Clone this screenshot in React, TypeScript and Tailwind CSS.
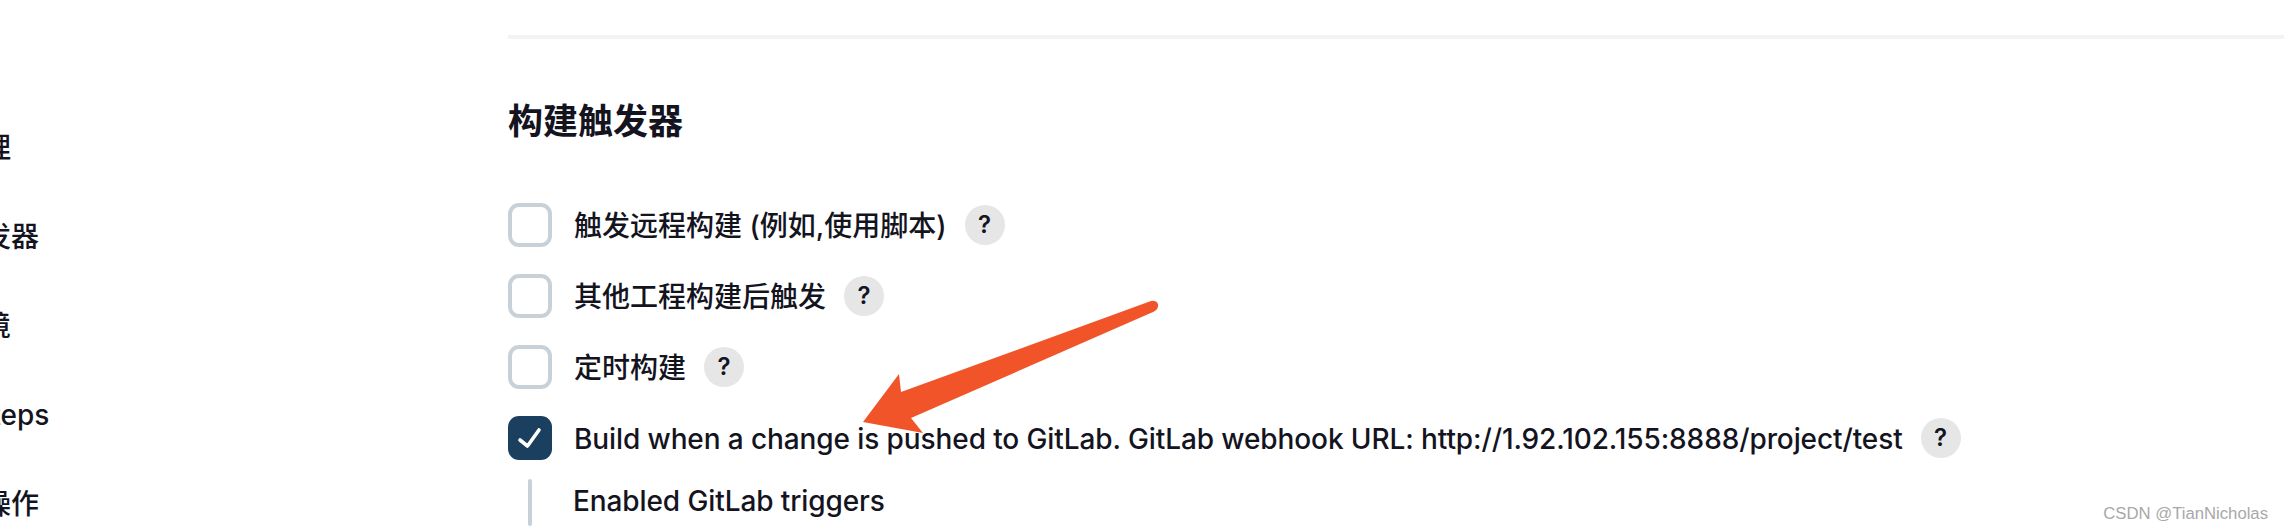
// sidebar nav, clipped on the left in the picture
const navItems = ['源码管理', '构建触发器', '构建环境', 'Build Steps', '构建后操作']

function HelpButton() {
  return (
    <span className="ml-[18px] flex h-10 w-10 shrink-0 items-center justify-center rounded-full bg-[#e6e6e7] text-[24px] font-semibold text-[#14141f]">
      ?
    </span>
  )
}

function TriggerRow({ label, checked = false }: { label: string; checked?: boolean }) {
  return (
    <div className="flex h-11 items-center">
      {checked ? (
        <span className="h-11 w-11 shrink-0 rounded-[11px] bg-[#1b3f5f]">
          <svg viewBox="0 0 44 44" className="h-11 w-11" fill="none">
            <path d="M12 24l7.5 6L31 14" stroke="#fff" strokeWidth="3.6" strokeLinecap="round" strokeLinejoin="round" />
          </svg>
        </span>
      ) : (
        <span className="h-11 w-11 shrink-0 rounded-[11px] border-[4px] border-[#c9d1d8] bg-white" />
      )}
      <span
        className={`mt-[2px] ml-[22px] text-[28px] font-medium whitespace-nowrap text-[#14141f] ${checked ? 'tracking-[-0.1px]' : ''}`}
      >
        {label}
      </span>
      <HelpButton />
    </div>
  )
}

export default function App() {
  return (
    <div
      className="relative flex h-[526px] w-[2284px] overflow-hidden bg-white text-[#14141f]"
      style={{ fontFamily: 'Inter, "Noto Sans CJK SC", sans-serif' }}
    >
      <aside className="flex w-[508px] shrink-0 flex-col gap-[50px] pt-[129px]">
        {navItems.map((item) => (
          <div key={item} className="-ml-[101px] h-[39px] text-[28px] leading-[39px] font-medium whitespace-nowrap">
            {item}
          </div>
        ))}
      </aside>

      <main className="flex min-w-0 flex-1 flex-col pt-[35px]">
        <div className="h-[5px] w-full bg-[#f3f3f6]" />
        <h2 className="mt-[57px] text-[35px] leading-[50px] font-bold">构建触发器</h2>
        <div className="mt-[57px] flex flex-col gap-[27px]">
          <TriggerRow label="触发远程构建 (例如,使用脚本)" />
          <TriggerRow label="其他工程构建后触发" />
          <TriggerRow label="定时构建" />
          <TriggerRow checked label="Build when a change is pushed to GitLab. GitLab webhook URL: http://1.92.102.155:8888/project/test" />
        </div>
        <div className="mt-[19px] ml-5 flex h-[60px]">
          <span className="w-1 shrink-0 rounded-full bg-[#c9d1d8]" />
          <span className="pl-[41px] text-[28px] leading-[44px] font-medium tracking-[-0.1px] whitespace-nowrap">
            Enabled GitLab triggers
          </span>
        </div>
      </main>

      {/* annotation arrow drawn over the page */}
      <svg className="absolute top-[296px] left-[860px] h-[140px] w-[300px]" viewBox="860 296 300 140">
        <path
          d="M1151 301Q1156 300 1158 304Q1159 309 1153 312L911 418L923 433L863 422L899 374L901 392Z"
          fill="#f05428"
        />
      </svg>

      {/* csdn watermark */}
      <span
        className="absolute top-[501px] right-[16px] text-[16.7px] text-[#a8a8a8]"
        style={{ fontFamily: '"Liberation Sans", sans-serif' }}
      >
        CSDN @TianNicholas
      </span>
    </div>
  )
}
